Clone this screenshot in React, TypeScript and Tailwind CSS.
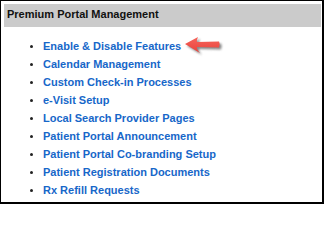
import React from 'react';

const items = [
  'Enable & Disable Features',
  'Calendar Management',
  'Custom Check-in Processes',
  'e-Visit Setup',
  'Local Search Provider Pages',
  'Patient Portal Announcement',
  'Patient Portal Co-branding Setup',
  'Patient Registration Documents',
  'Rx Refill Requests',
];

const Arrow = () => (
  <svg width="42" height="22" viewBox="0 0 42 22" className="ml-[3px] shrink-0">
    <defs>
      <filter id="sh" x="-20%" y="-30%" width="140%" height="160%">
        <feGaussianBlur stdDeviation="0.9" />
      </filter>
      <linearGradient id="rd" x1="0" y1="0" x2="0" y2="1">
        <stop offset="0" stopColor="#f6655c" />
        <stop offset="1" stopColor="#e8423b" />
      </linearGradient>
    </defs>
    {/* shadow */}
    <path
      d="M3 11 L16 4 Q14.5 7 15 9 L37 8.6 Q38.6 11.5 37 14.4 L15 14 Q14.5 16.5 18 20 Z"
      fill="#555"
      opacity="0.7"
      filter="url(#sh)"
    />
    <path
      d="M1 9 L14 2 Q12.5 5 13 7 L35 6.6 Q36.6 9.5 35 12.4 L13 12 Q12.5 14.5 16 18 Z"
      fill="url(#rd)"
    />
  </svg>
);

export default function App() {
  return (
    <div
      className="w-[324px] h-[204px] bg-white border-black border-l border-t border-r-2 border-b-2 pl-[3px] pt-[3px] pr-[1px]"
      style={{ fontFamily: '"Liberation Sans", Arial, sans-serif' }}
    >
      <div className="h-[23px] bg-[#cbcbcb] pl-[3px] pt-[3px] text-[11px] leading-[14px] font-bold text-[#111]">
        Premium Portal Management
      </div>
      <ul className="pt-[10px] pl-[26px]">
        {items.map((item) => (
          <li key={item} className="flex items-center h-[18px] text-[11px] leading-[18px] font-bold">
            <span className="w-[3px] h-[3px] rounded-full bg-[#222] mr-[10px] mt-[1px] shrink-0" />
            <span className="text-[#1767c9] whitespace-nowrap">{item}</span>
            {item.startsWith('Enable') && <Arrow />}
          </li>
        ))}
      </ul>
    </div>
  );
}
